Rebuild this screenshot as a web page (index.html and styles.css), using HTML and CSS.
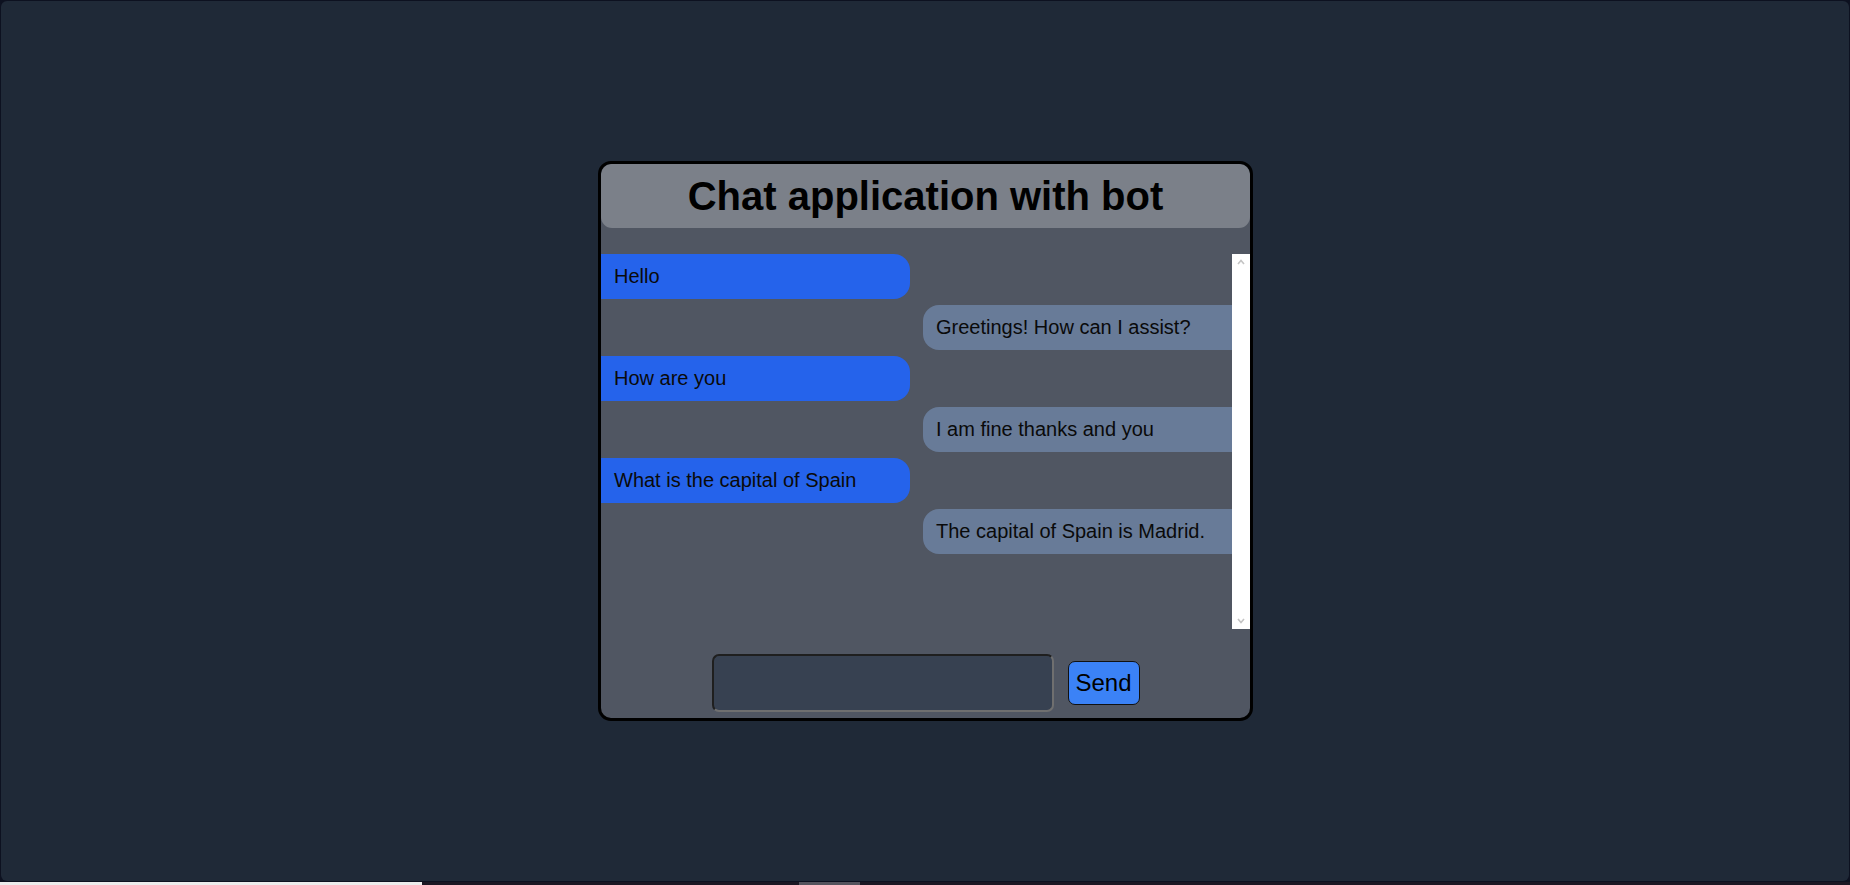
FILE: index.html
```html
<!DOCTYPE html>
<html lang="en">
<head>
<meta charset="utf-8">
<title>Chat application with bot</title>
<link rel="stylesheet" href="styles.css">
</head>
<body>
<div class="screen">
  <div class="card">
    <div class="header"><h1 class="title">Chat application with bot</h1></div>
    <div class="chat">
      <div class="messages">
        <div class="msg user">Hello</div>
        <div class="msg bot">Greetings! How can I assist?</div>
        <div class="msg user">How are you</div>
        <div class="msg bot">I am fine thanks and you</div>
        <div class="msg user">What is the capital of Spain</div>
        <div class="msg bot">The capital of Spain is Madrid.</div>
      </div>
      <div class="scrollbar">
        <svg class="arrow" width="10" height="8" viewBox="0 0 10 8"><polyline points="2,6 5,2.5 8,6" fill="none" stroke="#c4c4c4" stroke-width="1.6"/></svg>
        <svg class="arrow" width="10" height="8" viewBox="0 0 10 8"><polyline points="2,2 5,5.5 8,2" fill="none" stroke="#c4c4c4" stroke-width="1.6"/></svg>
      </div>
    </div>
    <div class="composer">
      <input class="input" type="text">
      <button class="send">Send</button>
    </div>
  </div>
</div>
<div class="strip">
  <div class="seg seg-white"></div>
  <div class="seg seg-dark1"></div>
  <div class="seg seg-gray"></div>
  <div class="seg seg-dark2"></div>
</div>
</body>
</html>
```
FILE: styles.css
```css
html, body {
  margin: 0;
  padding: 0;
}
body {
  background: #0d1120;
  font-family: "Liberation Sans", Arial, sans-serif;
  height: 885px;
  overflow: hidden;
}
.screen {
  margin: 1px 1px 0 1px;
  padding-left: 1px;
  height: 880px;
  border-radius: 6px;
  background: #1f2937;
  display: flex;
  align-items: center;
  justify-content: center;
}
.card {
  width: 649px;
  height: 554px;
  border: 3px solid #000;
  border-radius: 13px;
  background: #505662;
  display: flex;
  flex-direction: column;
  overflow: hidden;
  margin-top: -1px;
}
.header {
  height: 64px;
  background: #7b8089;
  border-radius: 11px;
  display: flex;
  align-items: center;
  justify-content: center;
  flex-shrink: 0;
}
.title {
  margin: 0;
  font-size: 40px;
  font-weight: bold;
  color: #000;
  line-height: 46px;
}
.chat {
  margin-top: 26px;
  height: 375px;
  display: flex;
  flex-shrink: 0;
}
.messages {
  flex: 1;
  overflow: hidden;
  display: flex;
  flex-direction: column;
  gap: 6.2px;
}
.msg {
  height: 45px;
  box-sizing: border-box;
  padding: 11px 13px;
  font-size: 20px;
  line-height: 23px;
  color: #0a0a0a;
  white-space: nowrap;
  flex-shrink: 0;
}
.user {
  width: 309px;
  background: #2563eb;
  border-radius: 0 16px 16px 0;
}
.bot {
  margin-left: 322px;
  background: #687b98;
  border-radius: 16px 0 0 16px;
}
.scrollbar {
  width: 18px;
  background: #fff;
  display: flex;
  flex-direction: column;
  justify-content: space-between;
  align-items: center;
  padding: 4px 0 4px;
  box-sizing: border-box;
}
.arrow {
  display: block;
}
.composer {
  margin-top: 25px;
  display: flex;
  align-items: center;
  justify-content: center;
  gap: 14px;
}
.input {
  width: 342px;
  height: 58px;
  box-sizing: border-box;
  background: #374151;
  border: 2px solid;
  border-color: #1f1f1f #6f6f6f #6f6f6f #1f1f1f;
  border-radius: 7px;
  margin: 0;
  padding: 0 8px;
  color: #fff;
  font-size: 18px;
}
.send {
  width: 72px;
  height: 44px;
  box-sizing: border-box;
  background: #3b82f6;
  border: 1px solid #111;
  border-radius: 7px;
  font-family: "Liberation Sans", Arial, sans-serif;
  font-size: 24px;
  color: #000;
  padding: 0;
  margin: 0;
}
.strip {
  margin-top: 1px;
  height: 3px;
  display: flex;
}
.seg {
  height: 3px;
}
.seg-white {
  width: 422px;
  background: #ececec;
}
.seg-dark1 {
  width: 377px;
  background: #1b1723;
}
.seg-gray {
  width: 61px;
  background: #55545e;
}
.seg-dark2 {
  flex: 1;
  background: #1b1723;
}
```
